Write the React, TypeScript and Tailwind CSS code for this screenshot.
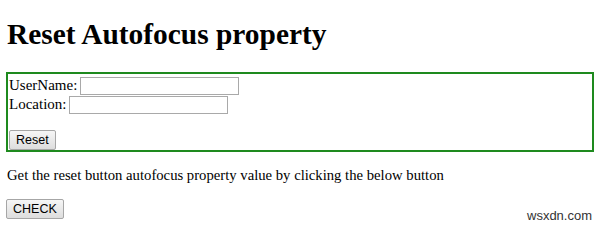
export default function App() {
  const serif = { fontFamily: '"Liberation Serif", "Times New Roman", serif' };
  const sans = { fontFamily: '"Liberation Sans", Arial, sans-serif' };
  const btn =
    "h-[20px] px-[6px] border border-[#a6a6a6] rounded-[2px] bg-gradient-to-b from-[#f6f6f6] to-[#dddddd] text-[12.5px] leading-none text-black flex items-center";
  return (
    <div className="relative w-[600px] h-[227px] bg-white text-black overflow-hidden" style={serif}>
      <div className="pl-[7px] pt-[17px]">
        <h1 className="text-[29.4px] leading-[34px] font-bold m-0">Reset Autofocus property</h1>
      </div>
      <div className="ml-[6px] mt-[21px] w-[588px] border-2 border-[#1e8a1e] pt-[2px] pl-[1px] text-[15px]">
        <div className="flex items-center h-[19px]">
          <span>UserName:</span>
          <span className="ml-[3px] w-[159px] h-[18px] border border-[#a9a9a9] bg-white"></span>
        </div>
        <div className="flex items-center h-[19px]">
          <span>Location:</span>
          <span className="ml-[3px] w-[159px] h-[18px] border border-[#a9a9a9] bg-white"></span>
        </div>
        <div className="h-[16px]"></div>
        <div className="flex">
          <button className={btn} style={sans}>Reset</button>
        </div>
      </div>
      <p className="pl-[7px] mt-[14px] text-[14.7px] leading-[18px]">
        Get the reset button autofocus property value by clicking the below button
      </p>
      <div className="pl-[6px] mt-[15px] flex">
        <button className={btn} style={sans}>CHECK</button>
      </div>
      <div className="absolute left-[527px] top-[206px] text-[13px] text-[#333]" style={sans}>
        wsxdn.com
      </div>
    </div>
  );
}
